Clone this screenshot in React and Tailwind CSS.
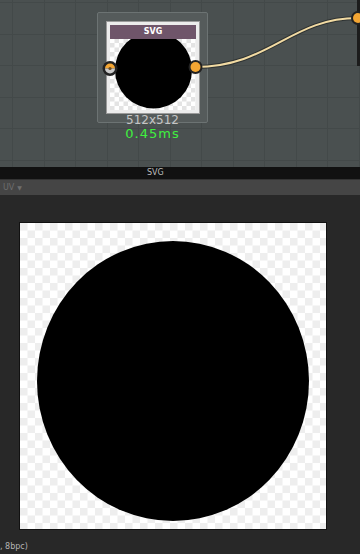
import React from "react";

function Checker({ id, size, children, w, h, dark }) {
  return (
    <svg width={w} height={h} className="block">
      <defs>
        <pattern id={id} width={size * 2} height={size * 2} patternUnits="userSpaceOnUse">
          <rect width={size * 2} height={size * 2} fill="#ffffff" />
          <rect width={size} height={size} fill={dark} />
          <rect x={size} y={size} width={size} height={size} fill={dark} />
        </pattern>
      </defs>
      <rect width={w} height={h} fill={`url(#${id})`} />
      {children}
    </svg>
  );
}

function GraphArea() {
  const vLines = [];
  for (let x = 12; x < 360; x += 31.5) vLines.push(x);
  const hLines = [];
  for (let y = 2; y < 167; y += 31.5) hLines.push(y);
  return (
    <div className="relative h-[167px] w-full overflow-hidden bg-[#4a5050]">
      <svg width="360" height="167" className="absolute left-0 top-0">
        {vLines.map((x) => (
          <line key={"v" + x} x1={Math.round(x) + 0.5} y1="0" x2={Math.round(x) + 0.5} y2="167" stroke="#434949" strokeWidth="1" />
        ))}
        {hLines.map((y) => (
          <line key={"h" + y} x1="0" y1={Math.round(y) + 0.5} x2="360" y2={Math.round(y) + 0.5} stroke="#434949" strokeWidth="1" />
        ))}
      </svg>

      {/* node frame */}
      <div className="absolute left-[97px] top-[12px] h-[111px] w-[111px] rounded-[2px] border border-[#6c7373] bg-[#555b5b]">
        <div className="ml-[8px] mt-[8px] h-[93px] w-[94px] border border-[#9a9a9a] bg-[#ececec] p-[3px]">
          <div className="relative h-[85px] w-[86px]">
            <Checker id="nodechk" size={4.5} w={86} h={85} dark="#e4e4e4">
              <circle cx="43.5" cy="45" r="38.5" fill="#000" />
            </Checker>
            <div className="absolute left-0 top-0 flex h-[14px] w-[86px] items-center justify-center bg-[#6f556a] text-[8px] font-bold text-white [font-family:'DejaVu_Sans',sans-serif]">
              SVG
            </div>
          </div>
        </div>
      </div>

      {/* wire + pins */}
      <svg width="360" height="167" className="absolute left-0 top-0">
        <path d="M195 67 C 270 67, 290 18, 358 18" fill="none" stroke="#2e3232" strokeWidth="4" />
        <path d="M195 67 C 270 67, 290 18, 358 18" fill="none" stroke="#f2dba3" strokeWidth="2" />
        <rect x="357" y="0" width="3" height="66" fill="#1c1c1c" />
        <circle cx="358" cy="18" r="7" fill="#222" />
        <circle cx="358" cy="18" r="5" fill="#f4a633" />
        {/* left pin */}
        <circle cx="110" cy="68.5" r="7.5" fill="#222" />
        <path d="M105 68.5 A5 5 0 0 1 115 68.5 Z" fill="#f4a633" />
        <path d="M105 68.5 A5 5 0 0 0 115 68.5 Z" fill="#c9c9c9" />
        <circle cx="110" cy="68.5" r="1.6" fill="#6a4a20" />
        {/* right pin */}
        <circle cx="195.5" cy="67" r="7" fill="#222" />
        <circle cx="195.5" cy="67" r="5" fill="#f4a633" />
      </svg>

      <div className="absolute left-[97px] top-[114px] flex w-[111px] flex-col items-center [font-family:'DejaVu_Sans',sans-serif]">
        <div className="text-[12px] leading-[13px] text-[#c4c4c4]">512x512</div>
        <div className="text-[13px] leading-[14px] tracking-[1px] text-[#3ff03f]">0.45ms</div>
      </div>
    </div>
  );
}

export default function App() {
  return (
    <div className="flex h-[554px] w-[360px] flex-col overflow-hidden bg-[#282828] [font-family:'DejaVu_Sans',sans-serif]">
      <GraphArea />
      <div className="flex h-[12px] items-center bg-[#111111] pl-[147px] text-[8px] leading-none text-[#bdbdbd]">
        SVG
      </div>
      <div className="flex h-[16px] items-center gap-[3px] border-t border-[#333] bg-[#454545] pl-[3px] text-[8px] text-[#6e6e6e]">
        <span>UV</span>
        <span className="text-[6px]">▼</span>
      </div>
      <div className="relative flex-1">
        <div className="ml-[19px] mt-[27px] h-[308px] w-[308px] border border-[#111]">
          <Checker id="viewchk" size={7.5} w={306} h={306} dark="#eeeeee">
            <ellipse cx="153" cy="158" rx="136" ry="140" fill="#000" />
          </Checker>
        </div>
        <div className="absolute bottom-[2px] left-0 text-[8px] leading-[10px] text-[#b5b5b5]">
          , 8bpc)
        </div>
      </div>
    </div>
  );
}
